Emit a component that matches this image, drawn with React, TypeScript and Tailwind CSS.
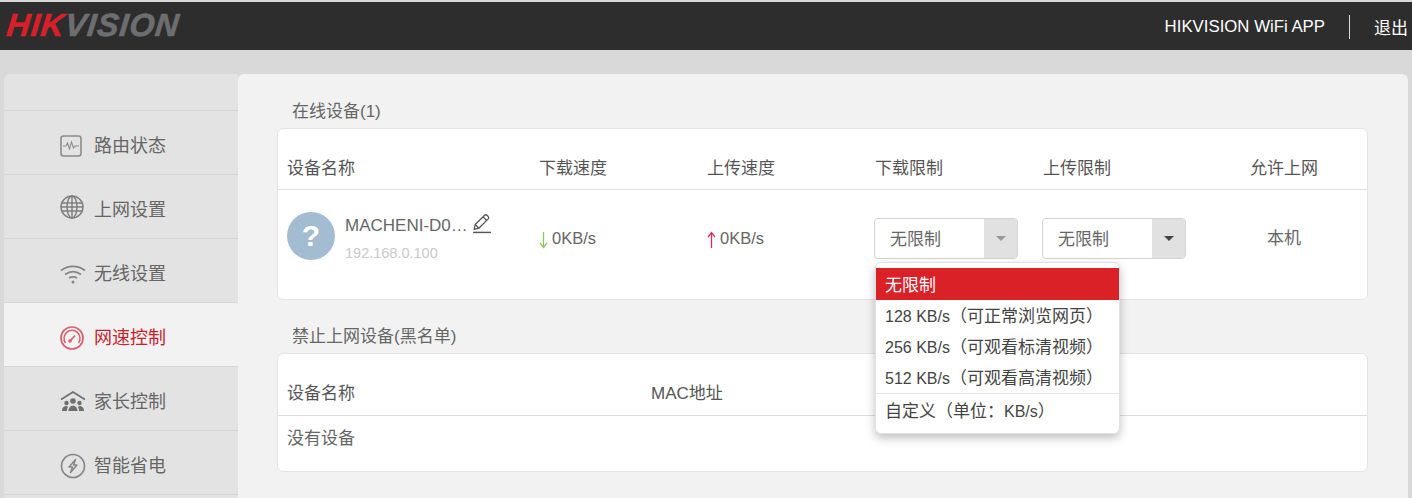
import type { ReactNode } from 'react';

const cjk = { fontFamily: '"Liberation Sans", "Noto Sans CJK SC", sans-serif' };

function StatusIcon() {
  return (
    <svg width="22" height="22" viewBox="0 0 22 22" fill="none" stroke="#8c8c8c">
      <rect x="1" y="1" width="20" height="20" rx="2.5" strokeWidth="1.6" />
      <path d="M3 11h3l1.5-3 2 6 2-7 2 6 1.2-2H19" strokeWidth="1.1" />
    </svg>
  );
}

function GlobeIcon() {
  return (
    <svg width="24" height="24" viewBox="0 0 24 24" fill="none" stroke="#808080" strokeWidth="1.5" className="mb-[6px]">
      <circle cx="12" cy="12" r="11" />
      <ellipse cx="12" cy="12" rx="5" ry="11" />
      <path d="M12 1v22M1.5 8h21M1.5 16h21M1 12h22" />
    </svg>
  );
}

function WifiIcon() {
  return (
    <svg width="26" height="20" viewBox="0 0 26 20" fill="none" stroke="#858585" strokeWidth="1.8">
      <path d="M1 6.5C8 1 18 1 25 6.5" />
      <path d="M5 10.5c5-3.5 11-3.5 16 0" />
      <path d="M9 14c2.5-1.5 5.5-1.5 8 0" />
      <circle cx="13" cy="18" r="1.5" fill="#858585" stroke="none" />
    </svg>
  );
}

function GaugeIcon() {
  return (
    <svg width="24" height="24" viewBox="0 0 24 24" fill="none" stroke="#d9606f">
      <circle cx="12" cy="12" r="11" strokeWidth="1.7" />
      <path d="M5.5 17A8 8 0 1 1 18.5 17" strokeWidth="1.5" />
      <path d="M9.5 15.5 15 9.5" strokeWidth="1.8" />
      <circle cx="10" cy="15" r="1.8" fill="#d9606f" stroke="none" />
    </svg>
  );
}

function FamilyIcon() {
  return (
    <svg width="26" height="22" viewBox="0 0 26 22" fill="#6f6f6f">
      <path d="M1 8.5 13 1l12 7.5" fill="none" stroke="#6f6f6f" strokeWidth="1.6" />
      <circle cx="13" cy="10" r="2.8" />
      <circle cx="6.5" cy="12" r="2.2" />
      <circle cx="19.5" cy="12" r="2.2" />
      <path d="M8.5 20c0-7 9-7 9 0zM2 20c0-5 5-6 6-4-1 1-1 3-1 4zM24 20c0-5-5-6-6-4 1 1 1 3 1 4z" />
    </svg>
  );
}

function PowerIcon() {
  return (
    <svg width="26" height="26" viewBox="0 0 26 26" fill="none" stroke="#858585">
      <circle cx="13" cy="13" r="11.5" strokeWidth="1.6" />
      <path d="M15.5 6.5 9 14h3.5l-2 5.5L17 12h-3.5z" strokeWidth="1.4" strokeLinejoin="round" />
    </svg>
  );
}

function EditIcon() {
  return (
    <svg width="21" height="21" viewBox="0 0 20 20" fill="none" stroke="#555" strokeWidth="1.2" strokeLinejoin="round">
      <path d="M3 15.5 4 11 13 2.2a1.6 1.6 0 0 1 2.2 0l1.2 1.2a1.6 1.6 0 0 1 0 2.2L7.5 14.5z" />
      <path d="M11.5 3.7 15 7.2M4 11l3.5 3.5" />
      <path d="M2 18.5h17" strokeWidth="1.4" />
    </svg>
  );
}

function SpeedArrow({ color, up }: { color: string; up?: boolean }) {
  return (
    <svg width="9" height="18" viewBox="0 0 9 18" fill="none" stroke={color} strokeWidth="1.3" className="mr-[4px] mt-[3px]">
      {up ? <path d="M4.5 17V2M1 6l3.5-4.5L8 6" /> : <path d="M4.5 1v15M1 12l3.5 4.5L8 12" />}
    </svg>
  );
}

const navItems: { label: string; icon: ReactNode; active?: boolean }[] = [
  { label: '路由状态', icon: <StatusIcon /> },
  { label: '上网设置', icon: <GlobeIcon /> },
  { label: '无线设置', icon: <WifiIcon /> },
  { label: '网速控制', icon: <GaugeIcon />, active: true },
  { label: '家长控制', icon: <FamilyIcon /> },
  { label: '智能省电', icon: <PowerIcon /> },
];

function LimitSelect({ dim }: { dim?: boolean }) {
  return (
    <div className="-ml-px flex h-[41px] w-[144px] overflow-hidden rounded-[4px] border border-[#d4d4d4] bg-white">
      <span className="flex-1 pl-[15px] text-[17px] leading-[41px] text-[#666]">无限制</span>
      <span className="flex w-[33px] items-center justify-center bg-[#e1e1e1]">
        <span className={`h-0 w-0 border-x-[5px] border-t-[5px] border-x-transparent ${dim ? 'border-t-[#999]' : 'border-t-[#444]'}`} />
      </span>
    </div>
  );
}

function MenuOption({ speed, note }: { speed: string; note: string }) {
  return (
    <div className="h-[31px] pl-[9px] leading-[34px]">
      <span className="text-[16px]">{speed}</span>
      {note}
    </div>
  );
}

function LimitMenu() {
  return (
    <div className="absolute left-[637px] top-[188px] w-[245px] rounded-[6px] border border-[#e2e2e2] bg-white pb-[6px] pt-[5px] text-[17px] text-[#444] shadow-[0_4px_10px_rgba(0,0,0,0.25)]">
      <div className="h-[32px] bg-[#da2128] pl-[9px] leading-[35px] text-white">无限制</div>
      <MenuOption speed="128 KB/s" note="（可正常浏览网页）" />
      <MenuOption speed="256 KB/s" note="（可观看标清视频）" />
      <MenuOption speed="512 KB/s" note="（可观看高清视频）" />
      <div className="border-t border-[#e5e5e5] pl-[9px] pt-[2px] leading-[31px]">
        自定义（单位：<span className="text-[16px]">KB/s</span>）
      </div>
    </div>
  );
}

export default function App() {
  return (
    <div className="h-[498px] w-[1412px] overflow-hidden bg-[#d9d9d9] pt-[2px]" style={cjk}>
      {/* Header */}
      <header className="flex h-[48px] items-center justify-between bg-[#2d2d2d] pl-[7px] pr-[4px]">
        <div className="mb-[2px] flex -skew-x-6 text-[32px] font-bold italic leading-none tracking-[1px] [-webkit-text-stroke:0.6px]">
          <span className="text-[#d8202a]">HIK</span>
          <span className="text-[#6d6e70]">VISION</span>
        </div>
        <div className="flex items-center pt-[2px] text-[16.8px] text-white">
          <span>HIKVISION WiFi APP</span>
          <span className="mx-[24px] h-[24px] w-px bg-[#d8d8d8]" />
          <span className="pt-[4px] text-[17px]">退出</span>
        </div>
      </header>

      <div className="flex px-[4px] pt-[24px]">
        {/* Sidebar */}
        <aside className="h-[430px] w-[234px] shrink-0 rounded-tl-[6px] bg-[#e3e3e3]">
          <div className="h-[37px] border-b border-[#d6d6d6]" />
          {navItems.map(item => (
            <div
              key={item.label}
              className={`flex h-[64px] items-center border-b border-[#d6d6d6] pl-[56px] pt-[7px] text-[18px] ${
                item.active ? 'bg-[#f2f2f2] text-[#c9222c]' : 'text-[#666]'
              }`}
            >
              <span className="flex w-[34px] items-center">{item.icon}</span>
              {item.label}
            </div>
          ))}
        </aside>

        {/* Main */}
        <main className="relative h-[430px] flex-1 rounded-r-[6px] rounded-tl-[6px] bg-[#f2f2f2] pl-[39px] pr-[40px]">
          <h2 className="pl-[15px] pt-[27px] text-[17px] leading-[22px] text-[#666]">在线设备(1)</h2>
          <section className="mt-[5px] h-[172px] rounded-[6px] border border-[#e4e4e4] bg-white">
            <div className="flex h-[61px] items-end border-b border-[#dedede] pb-[9px] pl-[9px] text-[17px] leading-[22px] text-[#555]">
              <span className="w-[252px]">设备名称</span>
              <span className="w-[168px]">下载速度</span>
              <span className="w-[168px]">上传速度</span>
              <span className="w-[168px]">下载限制</span>
              <span className="w-[168px]">上传限制</span>
              <span className="w-[146px] text-center">允许上网</span>
            </div>
            <div className="flex h-[108px] items-center pb-[12px] pl-[9px] text-[17px] text-[#666]">
              <div className="flex w-[252px] items-center pb-[4px]">
                <div className="flex h-[48px] w-[48px] items-center justify-center rounded-full bg-[#a3bcd1] text-[30px] font-bold leading-none text-white">?</div>
                <div className="ml-[10px] pt-[3px]">
                  <div className="flex items-center text-[17px] leading-[22px] text-[#666]">
                    MACHENI-D0…
                    <span className="mb-[4px] ml-[3px]"><EditIcon /></span>
                  </div>
                  <div className="mt-[6px] text-[14.5px] leading-[18px] text-[#c9c9c9]">192.168.0.100</div>
                </div>
              </div>
              <div className="flex w-[168px] items-center text-[16.5px]"><SpeedArrow color="#8cc560" />0KB/s</div>
              <div className="flex w-[168px] items-center text-[16.5px]"><SpeedArrow color="#d8305a" up />0KB/s</div>
              <div className="w-[168px]"><LimitSelect dim /></div>
              <div className="w-[168px]"><LimitSelect /></div>
              <div className="w-[146px] pt-[2px] text-center">本机</div>
            </div>
          </section>

          <h2 className="pl-[15px] pt-[26px] text-[17px] leading-[22px] text-[#666]">禁止上网设备(黑名单)</h2>
          <section className="mt-[5px] h-[119px] rounded-[6px] border border-[#e4e4e4] bg-white">
            <div className="flex h-[62px] items-end border-b border-[#dedede] pb-[10px] pl-[9px] text-[17px] leading-[22px] text-[#555]">
              <span className="w-[364px]">设备名称</span>
              <span>MAC地址</span>
            </div>
            <div className="pl-[9px] pt-[12px] text-[17px] leading-[22px] text-[#666]">没有设备</div>
          </section>

          <LimitMenu />
        </main>
      </div>
    </div>
  );
}
